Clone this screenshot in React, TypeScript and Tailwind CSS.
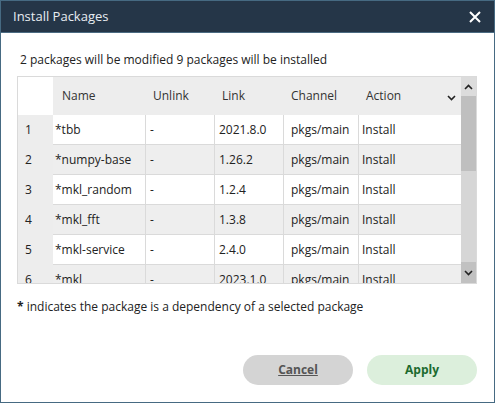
import React from "react";

const rows = [
  { n: "1", name: "*tbb", link: "2021.8.0" },
  { n: "2", name: "*numpy-base", link: "1.26.2" },
  { n: "3", name: "*mkl_random", link: "1.2.4" },
  { n: "4", name: "*mkl_fft", link: "1.3.8" },
  { n: "5", name: "*mkl-service", link: "2.4.0" },
  { n: "6", name: "*mkl", link: "2023.1.0" },
];

function Chevron({ up, className }: { up?: boolean; className?: string }) {
  return (
    <svg width="9" height="6" viewBox="0 0 9 6" className={className}>
      <path
        d={up ? "M1 5 L4.5 1.5 L8 5" : "M1 1 L4.5 4.5 L8 1"}
        stroke="#222"
        strokeWidth="1.6"
        fill="none"
      />
    </svg>
  );
}

export default function App() {
  return (
    <div
      className="w-[495px] h-[403px] bg-white border border-[#466a82] flex flex-col text-[#222]"
      style={{ fontFamily: '"Open Sans", sans-serif' }}
    >
      {/* title bar */}
      <div className="h-[32px] bg-[#253648] border-b border-[#4b6b82] flex items-center justify-between pl-[12px] pr-[13px] shrink-0">
        <span className="text-[13px] text-[#e8edf2]">Install Packages</span>
        <svg width="12" height="12" viewBox="0 0 12 12">
          <path d="M1 1 L11 11 M11 1 L1 11" stroke="#fff" strokeWidth="2" />
        </svg>
      </div>

      <div className="pl-[16px] pr-[17px]">
        <p className="text-[12px] pl-[3px] mt-[17px] h-[19px] leading-[19px]">
          2 packages will be modified 9 packages will be installed
        </p>

        {/* table */}
        <div className="mt-[7px] h-[208px] border border-[#dadada] flex overflow-hidden">
          <div className="w-[443px] flex flex-col text-[12px]">
            <div className="h-[38px] flex shrink-0 text-[#333]">
              <div className="w-[35px] bg-white" />
              <div className="flex-1 bg-[#ededed] flex items-center">
                <span className="w-[93px] pl-[9px]">Name</span>
                <span className="w-[69px] pl-[7px]">Unlink</span>
                <span className="w-[69px] pl-[7px]">Link</span>
                <span className="w-[75px] pl-[7px]">Channel</span>
                <span className="w-[102px] pl-[7px] flex items-center justify-between pr-[5px]">
                  Action
                  <Chevron className="mt-[3px]" />
                </span>
              </div>
            </div>
            {rows.map((r, i) => (
              <div key={r.n} className="h-[30px] flex shrink-0">
                <div className="w-[35px] bg-[#ededed] pl-[7px] flex items-center">
                  {r.n}
                </div>
                <div
                  className={`flex-1 flex border-b border-[#dadada] ${
                    i % 2 === 1 ? "bg-[#eeeeee]" : "bg-white"
                  }`}
                >
                  <div className="w-[93px] border-r border-[#dadada] pl-[2px] flex items-center">
                    {r.name}
                  </div>
                  <div className="w-[69px] border-r border-[#dadada] pl-[4px] flex items-center">
                    -
                  </div>
                  <div className="w-[69px] border-r border-[#dadada] pl-[4px] flex items-center">
                    {r.link}
                  </div>
                  <div className="w-[75px] border-r border-[#dadada] pl-[7px] flex items-center">
                    pkgs/main
                  </div>
                  <div className="w-[102px] pl-[3px] flex items-center">Install</div>
                </div>
              </div>
            ))}
          </div>
          {/* scrollbar */}
          <div className="w-[16px] flex flex-col bg-[#d6d6d6]">
            <div className="h-[19px] bg-[#dcdcdc] flex items-center justify-center">
              <Chevron up />
            </div>
            <div className="h-[75px] bg-[#bfbfbf]" />
            <div className="flex-1" />
            <div className="h-[21px] bg-[#c1c1c1] flex items-center justify-center">
              <Chevron />
            </div>
          </div>
        </div>

        <p className="text-[12px] mt-[14px] leading-[18px]">
          <span className="font-bold">*</span> indicates the package is a dependency of a selected
          package
        </p>
      </div>

      <div className="flex justify-end gap-[14px] pr-[17px] mt-[39px]">
        <button className="w-[110px] h-[30px] rounded-full bg-[#d4d4d4] text-[12px] font-bold text-[#555] underline">
          Cancel
        </button>
        <button className="w-[110px] h-[30px] rounded-full bg-[#dcefdc] text-[12px] font-bold text-[#1d6b2f]">
          Apply
        </button>
      </div>
    </div>
  );
}
